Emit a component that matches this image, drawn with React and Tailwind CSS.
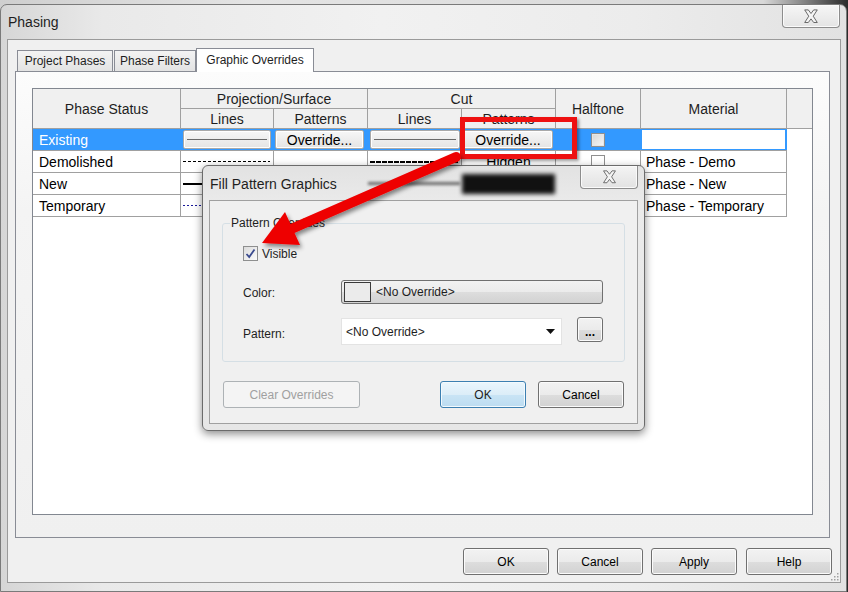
const font = "font-['Liberation_Sans',Arial,sans-serif]";

const winBtn =
  "flex items-center justify-center rounded-[3px] border border-[#707070] bg-[linear-gradient(#f2f2f2_0%,#ebebeb_50%,#dddddd_51%,#d2d2d2_100%)] shadow-[inset_0_0_0_1px_#fbfbfb] text-[12px] text-black";

const cellBtn =
  "flex h-[19px] items-center justify-center rounded-[2px] border border-[#a9a9a9] bg-[linear-gradient(#f7f7f7,#e4e4e4)] shadow-[inset_0_0_0_1px_#ffffff]";

function CloseX({ size = 18 }) {
  return (
    <svg width={size} height={size * 0.8} viewBox="0 0 20 16">
      <path
        d="M3 1 H7 L10 5 L13 1 H17 L12.5 8 L17 15 H13 L10 11 L7 15 H3 L7.5 8 Z"
        fill="#f4f4f4"
        stroke="#5a5a5a"
        strokeWidth="1"
        strokeLinejoin="round"
      />
    </svg>
  );
}

function HeaderCell({ className = "", children }) {
  return (
    <div
      className={
        "flex items-center justify-center border-r border-b border-[#a0a0a0] pt-[2px] " +
        className
      }
    >
      {children}
    </div>
  );
}

function Cell({ w, className = "", children }) {
  return (
    <div
      style={{ width: w }}
      className={"flex h-full shrink-0 items-center border-r " + className}
    >
      {children}
    </div>
  );
}

function Table() {
  const W = [148, 93, 94, 94, 94, 85, 146];
  return (
    <div className="ml-[16px] mt-[16px] h-[427px] w-[781px] border border-[#828790] bg-white text-[14px] text-black">
      <div className="grid grid-cols-[148px_93px_94px_94px_94px_85px_146px_1fr] grid-rows-[20px_20px] bg-[#f0f0f0] text-[#1e1e1e]">
        <HeaderCell className="col-start-1 row-span-2 row-start-1">Phase Status</HeaderCell>
        <HeaderCell className="col-span-2 col-start-2 row-start-1">Projection/Surface</HeaderCell>
        <HeaderCell className="col-span-2 col-start-4 row-start-1">Cut</HeaderCell>
        <HeaderCell className="col-start-6 row-span-2 row-start-1">Halftone</HeaderCell>
        <HeaderCell className="col-start-7 row-span-2 row-start-1">Material</HeaderCell>
        <div className="col-start-8 row-span-2 row-start-1 border-b border-[#a0a0a0]" />
        <HeaderCell className="col-start-2 row-start-2">Lines</HeaderCell>
        <HeaderCell className="col-start-3 row-start-2">Patterns</HeaderCell>
        <HeaderCell className="col-start-4 row-start-2">Lines</HeaderCell>
        <HeaderCell className="col-start-5 row-start-2">Patterns</HeaderCell>
      </div>

      {/* Existing (selected) */}
      <div className="flex h-[22px] w-[754px] border-b border-[#a0a0a0] bg-[#3399ff]">
        <Cell w={W[0]} className="border-[#3399ff] pl-[6px] pt-[2px] text-white">Existing</Cell>
        <Cell w={W[1]} className="border-[#3399ff] pl-[2px]">
          <div className={cellBtn + " w-[88px]"}>
            <div className="h-px w-[80px] bg-[#6a6a6a]" />
          </div>
        </Cell>
        <Cell w={W[2]} className="border-[#3399ff] pl-[1px]">
          <div className={cellBtn + " w-[89px] pt-[1px]"}>Override...</div>
        </Cell>
        <Cell w={W[3]} className="border-[#3399ff] pl-[2px]">
          <div className={cellBtn + " w-[90px]"}>
            <div className="h-px w-[82px] bg-[#6a6a6a]" />
          </div>
        </Cell>
        <Cell w={W[4]} className="border-[#3399ff] pl-[1px]">
          <div className={cellBtn + " w-[90px] pt-[1px]"}>Override...</div>
        </Cell>
        <Cell w={W[5]} className="justify-center border-[#3399ff]">
          <div className="h-[14px] w-[14px] border border-[#8f8f8f] bg-[linear-gradient(135deg,#d6d6d6,#f7f7f7)] shadow-[inset_0_0_0_1px_#e6e6e6]" />
        </Cell>
        <Cell w={W[6]} className="border-[#3399ff] p-[1px]">
          <div className="h-full w-full bg-white" />
        </Cell>
      </div>

      {/* Demolished */}
      <div className="flex h-[22px] w-[754px] border-b border-[#a0a0a0]">
        <Cell w={W[0]} className="border-[#a0a0a0] pl-[6px] pt-[2px]">Demolished</Cell>
        <Cell w={W[1]} className="border-[#a0a0a0] pl-[2px]">
          <div className="h-px w-[87px] bg-[repeating-linear-gradient(90deg,#000_0_3px,transparent_3px_5px)]" />
        </Cell>
        <Cell w={W[2]} className="border-[#a0a0a0]" />
        <Cell w={W[3]} className="border-[#a0a0a0] pl-[2px]">
          <div className="h-[2px] w-[88px] bg-[repeating-linear-gradient(90deg,#000_0_5px,transparent_5px_6px)]" />
        </Cell>
        <Cell w={W[4]} className="justify-center border-[#a0a0a0] pt-[2px]">Hidden</Cell>
        <Cell w={W[5]} className="justify-center border-[#a0a0a0]">
          <div className="h-[14px] w-[14px] border border-[#8f8f8f] bg-white" />
        </Cell>
        <Cell w={W[6]} className="border-[#a0a0a0] pl-[5px] pt-[2px]">Phase - Demo</Cell>
      </div>

      {/* New */}
      <div className="flex h-[22px] w-[754px] border-b border-[#a0a0a0]">
        <Cell w={W[0]} className="border-[#a0a0a0] pl-[6px] pt-[2px]">New</Cell>
        <Cell w={W[1]} className="border-[#a0a0a0] pl-[2px]">
          <div className="h-[2px] w-[87px] bg-black" />
        </Cell>
        <Cell w={W[2]} className="border-[#a0a0a0]" />
        <Cell w={W[3]} className="border-[#a0a0a0]" />
        <Cell w={W[4]} className="border-[#a0a0a0]" />
        <Cell w={W[5]} className="border-[#a0a0a0]" />
        <Cell w={W[6]} className="border-[#a0a0a0] pl-[5px] pt-[2px]">Phase - New</Cell>
      </div>

      {/* Temporary */}
      <div className="flex h-[22px] w-[754px] border-b border-[#a0a0a0]">
        <Cell w={W[0]} className="border-[#a0a0a0] pl-[6px] pt-[2px]">Temporary</Cell>
        <Cell w={W[1]} className="border-[#a0a0a0] pl-[2px]">
          <div className="h-px w-[87px] bg-[repeating-linear-gradient(90deg,#1a1a9a_0_2px,transparent_2px_4px)]" />
        </Cell>
        <Cell w={W[2]} className="border-[#a0a0a0]" />
        <Cell w={W[3]} className="border-[#a0a0a0]" />
        <Cell w={W[4]} className="border-[#a0a0a0]" />
        <Cell w={W[5]} className="border-[#a0a0a0]" />
        <Cell w={W[6]} className="border-[#a0a0a0] pl-[5px] pt-[2px]">Phase - Temporary</Cell>
      </div>
    </div>
  );
}

function FillPatternDialog() {
  return (
    <div className="absolute left-[202px] top-[165px] z-20 flex h-[266px] w-[443px] flex-col overflow-hidden rounded-[6px] border border-[#6b6b6b] bg-[linear-gradient(#e2e2e2,#ebebeb_40px,#e6e6e6)] shadow-[0_3px_9px_rgba(0,0,0,0.45)]">
      <div className="relative h-[34px] shrink-0">
        <div className="absolute left-[165px] top-[16px] h-[3px] w-[92px] bg-[#6a6a6a] blur-[1.5px]" />
        <div className="absolute left-[259px] top-[8px] h-[20px] w-[93px] bg-[#111] blur-[2px]" />
        <div className="relative pl-[7px] pt-[10px] text-[14px] leading-[17px] text-[#1e1e1e]">
          Fill Pattern Graphics
        </div>
        <div className="absolute right-[6px] top-0 flex h-[23px] w-[58px] items-center justify-center rounded-b-[4px] border border-t-0 border-[#8d8d8d] bg-[linear-gradient(#f4f4f4,#e2e2e2)] shadow-[inset_0_0_0_1px_#fafafa]">
          <CloseX size={17} />
        </div>
      </div>

      <div className="mx-[6px] h-[224px] border border-[#a0a0a0] bg-[#f0f0f0] text-[12px] text-[#1e1e1e]">
        <div className="relative ml-[12px] mt-[22px] h-[139px] w-[403px] rounded-[3px] border border-[#d5dfe5]">
          <span className="absolute left-[7px] top-[-8px] bg-[#f0f0f0] px-[1px] leading-[14px]">
            Pattern Overrides
          </span>

          <div className="ml-[20px] mt-[21px] flex h-[16px] items-center gap-[4px]">
            <div className="flex h-[15px] w-[15px] items-center justify-center border border-[#8e8f8f] bg-[linear-gradient(135deg,#dcdcdc,#fbfbfb)]">
              <svg width="11" height="11" viewBox="0 0 11 11">
                <path d="M1.5 6 L4.2 9 L9.5 1.5" fill="none" stroke="#3b4b8f" strokeWidth="1.8" />
              </svg>
            </div>
            <span className="pt-[1px]">Visible</span>
          </div>

          <div className="ml-[20px] mt-[19px] flex h-[24px] items-center">
            <span className="w-[98px] pt-[1px]">Color:</span>
            <div className="flex h-[24px] w-[262px] items-center gap-[5px] rounded-[3px] border border-[#707070] bg-[linear-gradient(#f2f2f2_0%,#ebebeb_50%,#dddddd_51%,#d2d2d2_100%)] pl-[2px]">
              <div className="h-[20px] w-[27px] border border-[#3a3a3a] bg-[#ebebeb]" />
              <span>&lt;No Override&gt;</span>
            </div>
          </div>

          <div className="ml-[20px] mt-[13px] flex h-[28px] items-start">
            <span className="mt-[8px] w-[98px]">Pattern:</span>
            <div className="mt-[1px] flex h-[27px] w-[221px] items-center justify-between border border-[#e3e3e3] bg-white pl-[4px] pr-[6px]">
              <span className="pt-[1px]">&lt;No Override&gt;</span>
              <svg width="9" height="5" viewBox="0 0 9 5">
                <path d="M0 0 H9 L4.5 5 Z" fill="#111" />
              </svg>
            </div>
            <div className={winBtn + " ml-[15px] h-[25px] w-[26px] items-end pb-[6px] text-[11px] font-bold leading-[6px]"}>
              ...
            </div>
          </div>
        </div>

        <div className="mx-[13px] mt-[19px] flex h-[27px] items-center">
          <div className="flex h-[27px] w-[137px] items-center justify-center rounded-[3px] border border-[#adb2b5] bg-[#f4f4f4] text-[#a0a0a0]">
            Clear Overrides
          </div>
          <div className="ml-auto flex h-[27px] w-[86px] items-center justify-center rounded-[3px] border border-[#3c7fb1] bg-[linear-gradient(#eaf6fd_0%,#dcedf8_50%,#c9e4f5_51%,#bcdcf1_100%)] shadow-[inset_0_0_0_1px_#f3fafe]">
            OK
          </div>
          <div className={winBtn + " ml-[12px] h-[27px] w-[86px]"}>Cancel</div>
        </div>
      </div>
    </div>
  );
}

function Arrow() {
  return (
    <svg
      className="pointer-events-none absolute left-0 top-0 z-30"
      width="848"
      height="592"
      viewBox="0 0 848 592"
    >
      <defs>
        <filter id="arrowShadow" x="-20%" y="-20%" width="140%" height="140%">
          <feDropShadow dx="2" dy="3" stdDeviation="2" floodColor="#000" floodOpacity="0.45" />
        </filter>
      </defs>
      <g filter="url(#arrowShadow)">
        <line x1="456" y1="157" x2="289" y2="230" stroke="#ee0000" strokeWidth="10" strokeLinecap="round" />
        <polygon points="262,243 285,212 300,245" fill="#ee0000" />
      </g>
    </svg>
  );
}

export default function App() {
  return (
    <div className={"relative h-[592px] w-[848px] overflow-hidden bg-[linear-gradient(90deg,#cfcfcf,#e4e4e4_30%,#d8d8d8_90%,#2a2a2a)] pt-[4px] " + font}>
      <div className="relative h-[588px] w-[847px] rounded-t-[7px] border border-[#7a7a7a] bg-[linear-gradient(90deg,#d6d6d6,#e9e9e9_12%,#f1f1f1_45%,#ececec_75%,#e2e2e2)]">
        <div className="h-[34px] pl-[7px] pt-[9px] text-[14px] leading-[17px] text-[#1e1e1e]">Phasing</div>
        <div className="absolute right-[6px] top-0 flex h-[23px] w-[58px] items-center justify-center rounded-b-[4px] border border-t-0 border-[#8d8d8d] bg-[linear-gradient(#f6f6f6,#e4e4e4)] shadow-[inset_0_0_0_1px_#fbfbfb]">
          <CloseX size={18} />
        </div>

        <div className="relative ml-[6px] flex h-[544px] w-[834px] flex-col border border-[#9a9a9a] bg-[#f0f0f0] pl-[7px] pt-[8px] text-[12px]">
          <div className="ml-[2px] flex h-[23px] items-end">
            <div className="flex h-[21px] w-[96px] items-center justify-center border border-b-0 border-[#898c95] bg-[linear-gradient(#f3f3f3,#e3e3e3)] text-[#1e1e1e]">
              Project Phases
            </div>
            <div className="ml-[1px] flex h-[21px] w-[82px] items-center justify-center border border-b-0 border-[#898c95] bg-[linear-gradient(#f3f3f3,#e3e3e3)] text-[#1e1e1e]">
              Phase Filters
            </div>
            <div className="relative z-10 mb-[-1px] flex h-[24px] w-[118px] items-center justify-center border border-b-0 border-[#898c95] bg-white pb-[2px] text-[#1e1e1e]">
              Graphic Overrides
            </div>
          </div>

          <div className="h-[467px] w-[815px] border border-[#898c95] bg-[linear-gradient(#fcfcfc,#f4f4f4_30%,#f0f0f0)]">
            <Table />
          </div>

          <div className="mr-[8px] mt-[10px] flex justify-end gap-[8px]">
            <div className={winBtn + " h-[27px] w-[86px]"}>OK</div>
            <div className={winBtn + " h-[27px] w-[86px]"}>Cancel</div>
            <div className={winBtn + " h-[27px] w-[86px]"}>Apply</div>
            <div className={winBtn + " ml-[1px] h-[27px] w-[86px]"}>Help</div>
          </div>

          <svg className="absolute bottom-[1px] right-[1px]" width="9" height="9" viewBox="0 0 9 9">
            <g fill="#a0a0a0">
              <rect x="7" y="1" width="1.5" height="1.5" />
              <rect x="4" y="4" width="1.5" height="1.5" />
              <rect x="7" y="4" width="1.5" height="1.5" />
              <rect x="1" y="7" width="1.5" height="1.5" />
              <rect x="4" y="7" width="1.5" height="1.5" />
              <rect x="7" y="7" width="1.5" height="1.5" />
            </g>
          </svg>
        </div>
      </div>

      <div className="absolute left-[460px] top-[117px] z-20 h-[42px] w-[117px] border-[5px] border-[#ee1111] shadow-[2px_2px_3px_rgba(0,0,0,0.4)]" />

      <FillPatternDialog />
      <Arrow />
    </div>
  );
}
